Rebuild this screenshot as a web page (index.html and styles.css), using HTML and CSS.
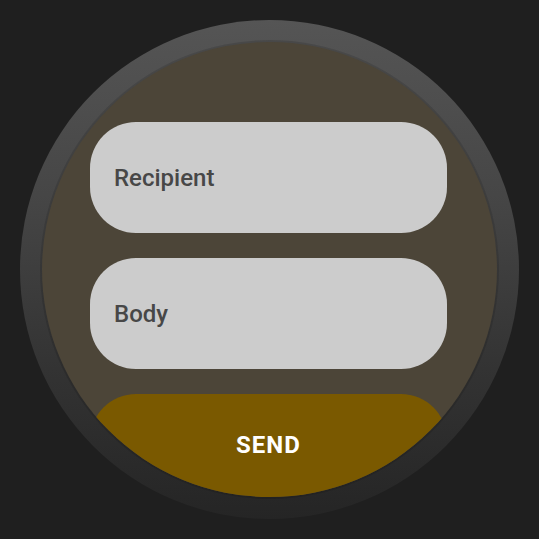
FILE: index.html
```html
<!DOCTYPE html>
<html>
<head>
<meta charset="utf-8">
<link rel="stylesheet" href="styles.css">
</head>
<body>
<div class="watch">
  <div class="screen">
    <div class="field">Recipient</div>
    <div class="field">Body</div>
    <div class="send">SEND</div>
  </div>
</div>
</body>
</html>
```
FILE: styles.css
```css
html, body {
  margin: 0;
  padding: 0;
  background: #1f1f1f;
}
body {
  width: 539px;
  height: 539px;
  overflow: hidden;
  font-family: Roboto, "Liberation Sans", sans-serif;
}
.watch {
  margin: 20px 0 0 20px;
  width: 499px;
  height: 499px;
  border-radius: 50%;
  background: linear-gradient(180deg, #555555 0%, #464646 35%, #333333 70%, #252525 100%);
  padding: 22px;
  box-sizing: border-box;
}
.screen {
  width: 455px;
  height: 455px;
  border-radius: 50%;
  background: #4c4538;
  overflow: hidden;
  box-shadow: 0 0 0 2px rgba(0, 0, 0, 0.12);
  padding: 80px 0 0 48px;
  box-sizing: border-box;
  display: flex;
  flex-direction: column;
  gap: 25px;
}
.field {
  flex: none;
  width: 357px;
  height: 111px;
  border-radius: 46px;
  background: #cccccc;
  color: #474747;
  font-size: 24px;
  font-weight: 500;
  display: flex;
  align-items: center;
  padding-left: 24px;
  box-sizing: border-box;
}
.send {
  flex: none;
  width: 357px;
  height: 111px;
  border-radius: 46px;
  background: #7a5900;
  color: #ffffff;
  font-size: 24px;
  font-weight: 700;
  letter-spacing: 1px;
  display: flex;
  justify-content: center;
  padding-top: 37px;
  box-sizing: border-box;
}
```
